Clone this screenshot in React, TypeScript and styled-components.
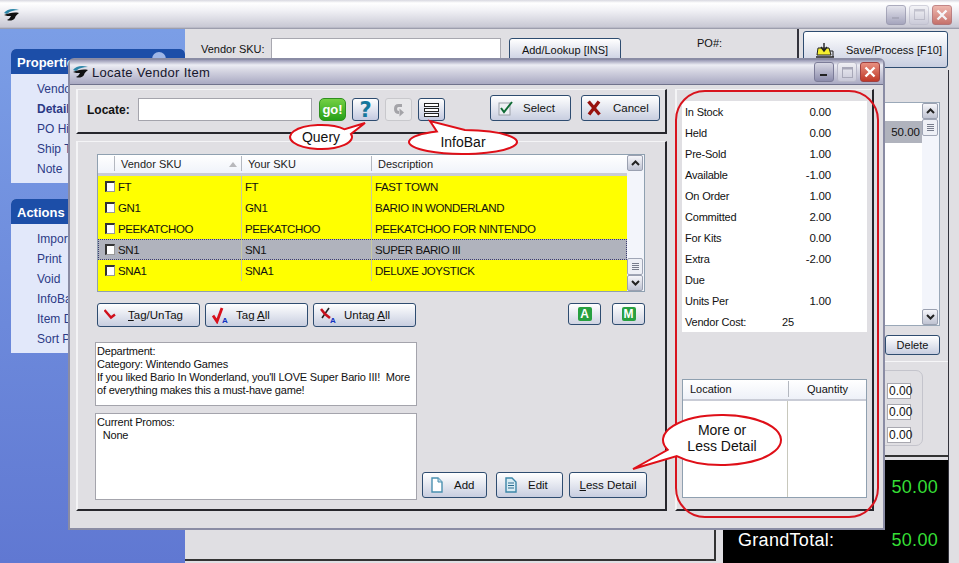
import React from "react";
import styled, { createGlobalStyle } from "styled-components";

const GlobalStyle = createGlobalStyle`
  html, body {
    margin: 0;
    padding: 0;
    background: #e0dfe3;
  }
  * {
    box-sizing: border-box;
  }
`;

const Page = styled.div`
  position: relative;
  width: 959px;
  height: 563px;
  overflow: hidden;
  background: #e0dfe3;
  font-family: "Liberation Sans", Arial, sans-serif;
  font-size: 11px;
  color: #111;
  display: flex;
  flex-direction: column;
`;

const MainTitle = styled.div`
  height: 29px;
  flex: none;
  display: flex;
  align-items: center;
  padding: 0 7px 0 3px;
  background: linear-gradient(#d8d8e0 0, #ffffff 3px, #f2f2f6 10px, #c8c8d4 27px, #8e90a0 29px);
`;

const Controls = styled.div`
  margin-left: auto;
  display: flex;
  gap: 3px;
`;

const WinBtn = styled.div<{ $kind: "min" | "max" | "close"; $faded?: boolean }>`
  width: 20px;
  height: 20px;
  border-radius: 3px;
  display: flex;
  align-items: center;
  justify-content: center;
  border: 1px solid ${(p) => (p.$kind === "close" ? "#a04040" : p.$kind === "min" ? "#7c7c98" : "#b8b8c8")};
  background: ${(p) =>
    p.$kind === "close"
      ? "linear-gradient(#e89080, #c03828)"
      : p.$kind === "min"
      ? "linear-gradient(#d8d8e4, #8c8cac)"
      : "linear-gradient(#f0f0f4, #c8c8d8)"};
  opacity: ${(p) => (p.$faded ? 0.62 : 1)};
`;

const Desktop = styled.div`
  flex: 1;
  display: flex;
  min-height: 0;
`;

const Sidebar = styled.aside`
  width: 185px;
  flex: none;
  padding: 20px 0 0 11px;
  background: linear-gradient(#7b9ee6, #6078d2);
  display: flex;
  flex-direction: column;
  gap: 16px;
`;

const TaskCard = styled.section`
  background: #e2e8fa;
  border-radius: 5px 5px 0 0;
`;

const TaskHead = styled.h3`
  position: relative;
  margin: 0;
  height: 25px;
  padding: 2px 0 0 6px;
  display: flex;
  align-items: center;
  font-size: 13px;
  font-weight: bold;
  color: #fff;
  background: #1c4ea8;
  border-radius: 5px 5px 0 0;
`;

const CollapseDot = styled.span`
  position: absolute;
  left: 141px;
  top: 3px;
  width: 14px;
  height: 14px;
  border-radius: 50%;
  background: #9fb6e6;
`;

const TaskList = styled.ul`
  margin: 0;
  padding: 5px 0 4px 26px;
  list-style: none;
`;

const TaskItem = styled.li<{ $bold?: boolean }>`
  height: 20px;
  line-height: 20px;
  font-size: 12px;
  color: #2c3a86;
  font-weight: ${(p) => (p.$bold ? "bold" : "normal")};
`;

const Workspace = styled.main`
  flex: 1;
  display: flex;
  flex-direction: column;
  min-width: 0;
`;

const TopRow = styled.div`
  height: 41px;
  flex: none;
  display: flex;
  align-items: flex-start;
  padding: 9px 10px 0 16px;
`;

const VendorLabel = styled.span`
  margin: 5px 8px 0 0;
  width: 62px;
  white-space: nowrap;
`;

const BackInput = styled.div`
  width: 230px;
  height: 24px;
  background: #fff;
  border: 1px solid #a8a8b0;
`;

const BackButton = styled.div`
  margin-left: 8px;
  width: 112px;
  height: 24px;
  display: flex;
  align-items: center;
  justify-content: center;
  border: 1px solid #2e4c70;
  border-radius: 3px;
  background: linear-gradient(#fff, #c8cee0);
`;

const PoLabel = styled.span`
  margin: -1px 0 0 76px;
`;

const SaveColumn = styled.div`
  margin-left: auto;
  padding-left: 4px;
  border-left: 2px solid #33333c;
  height: 70px;
  margin-top: -9px;
  width: 152px;
  flex: none;
`;

const SaveButton = styled.div`
  margin-top: 2px;
  height: 37px;
  width: 145px;
  display: flex;
  align-items: center;
  gap: 11px;
  padding-left: 11px;
  border: 1px solid #2e4c70;
  border-radius: 3px;
  background: linear-gradient(#fff, #c8cee0);
  white-space: nowrap;
  svg {
    flex: none;
  }
`;

const BackContent = styled.div`
  flex: 1;
  display: flex;
  min-height: 0;
`;

const BackLeft = styled.div`
  flex: 1;
  margin-bottom: 2px;
  border-right: 2px solid #333;
  border-bottom: 2px solid #333;
`;

const BackRight = styled.div`
  width: 226px;
  margin: 0 10px 0 7px;
  flex: none;
  display: flex;
  flex-direction: column;
  border-right: 1px solid #33333c;
`;

const BackTable = styled.div`
  margin-top: 32px;
  margin-right: 8px;
  height: 224px;
  flex: none;
  display: flex;
  background: #fff;
  border: 1px solid #9aa8b8;
`;

const BackTableBody = styled.div`
  flex: 1;
  padding-top: 18px;
`;

const BackRow = styled.div`
  height: 22px;
  line-height: 22px;
  text-align: right;
  padding-right: 2px;
  font-size: 11.5px;
  background: #b0b3bd;
`;

const DeleteRow = styled.div`
  display: flex;
  justify-content: flex-end;
  margin: 9px 8px 6px 0;
`;

const DeleteButton = styled.div`
  width: 55px;
  height: 20px;
  display: flex;
  align-items: center;
  justify-content: center;
  border: 1px solid #2e4c70;
  border-radius: 3px;
  background: linear-gradient(#fff, #c8cee0);
`;

const TotalsPanel = styled.div`
  height: 96px;
  flex: none;
  padding: 8px 0 0 100px;
  border-top: 1px solid #f6f6f8;
  border-bottom: 2px solid #333;
`;

const TotalsGroup = styled.div`
  width: 100px;
  height: 76px;
  padding: 12px 11px 0 0;
  display: flex;
  flex-direction: column;
  align-items: flex-end;
  border: 1px solid #c4c4cc;
  border-radius: 7px;
`;

const TotalBox = styled.div<{ $top: number }>`
  margin-top: ${(p) => p.$top}px;
  width: 24px;
  height: 16px;
  line-height: 15px;
  padding-left: 1px;
  font-size: 12px;
  background: #fff;
  border: 1px solid #a8a8b0;
`;

const BlackPanel = styled.div`
  margin-top: 3px;
  flex: 1;
  min-height: 0;
  background: #000;
  font-size: 18px;
  letter-spacing: 0.3px;
  color: #fff;
  display: flex;
  flex-direction: column;
  justify-content: flex-end;
  padding: 0 10px 12px 15px;
`;

const TotalLine = styled.div`
  display: flex;
  justify-content: space-between;
  height: 21px;
  & + & {
    margin-top: 32px;
  }
`;

const Green = styled.span`
  color: #35de35;
`;

/* modal */

const Modal = styled.div`
  position: absolute;
  left: 68px;
  top: 58px;
  width: 817px;
  height: 472px;
  background: #e0dfe3;
  border: 2px solid #8a8ca4;
  border-top-left-radius: 6px;
  border-top-right-radius: 6px;
  display: flex;
  flex-direction: column;
`;

const ModalTitle = styled.div`
  height: 24px;
  flex: none;
  display: flex;
  align-items: center;
  gap: 3px;
  padding: 0 3px 0 2px;
  font-size: 13px;
  letter-spacing: 0.3px;
  color: #16162c;
  text-shadow: 1px 1px 0 #c8c8d8;
  background: linear-gradient(#9898b4, #ecedf4 5px, #d8d8e4 10px, #a9a9c2 24px);
`;

const ModalBody = styled.div`
  flex: 1;
  display: flex;
  gap: 8px;
  padding: 4px 0 17px 6px;
  border-top: 1px solid #70728c;
  min-height: 0;
`;

const LeftColumn = styled.div`
  width: 591px;
  flex: none;
  display: flex;
  flex-direction: column;
  gap: 7px;
`;

const Panel = styled.div`
  border-style: solid;
  border-width: 1px 2px 2px 2px;
  border-color: #f4f4f6 #26262c #26262c #f4f4f6;
`;

const ToolbarPanel = styled(Panel)`
  height: 45px;
  flex: none;
  display: flex;
  align-items: flex-start;
  padding: 8px 0 0 9px;
`;

const LocateLabel = styled.label`
  font-size: 12px;
  font-weight: bold;
  margin: 5px 9px 0 0;
  width: 42px;
`;

const LocateInput = styled.div`
  width: 174px;
  height: 23px;
  background: #fff;
  border: 1px solid #a4a4ac;
`;

const SquareBtn = styled.div<{ $left: number }>`
  margin-left: ${(p) => p.$left}px;
  width: 27px;
  height: 23px;
  display: flex;
  align-items: center;
  justify-content: center;
  border: 1px solid #2e4c70;
  border-radius: 3px;
  background: linear-gradient(#fff, #c4cae0);
`;

const GoBtn = styled(SquareBtn)`
  border-color: #2f8f20;
  border-radius: 5px;
  background: linear-gradient(#74d044, #26a018);
  color: #fff;
  font-weight: bold;
  font-size: 13px;
`;

const HelpBtn = styled(SquareBtn)`
  color: #15789c;
  font-weight: bold;
  font-size: 21px;
  font-family: "DejaVu Sans", sans-serif;
`;

const DisabledBtn = styled(SquareBtn)`
  border-color: #c8c8cc;
  background: #e8e8ea;
`;

const ActionBtn = styled.div<{ $left: number; $width: number; $pad: number; $gap: number }>`
  margin: -3px 0 0 ${(p) => p.$left}px;
  width: ${(p) => p.$width}px;
  height: 26px;
  display: flex;
  align-items: center;
  gap: ${(p) => p.$gap}px;
  padding-left: ${(p) => p.$pad}px;
  font-size: 11.5px;
  border: 1px solid #2e4c70;
  border-radius: 3px;
  background: linear-gradient(#fff, #c8cee0);
`;

const ListPanel = styled(Panel)`
  flex: 1;
  padding: 12px 0 0 19px;
  display: flex;
  flex-direction: column;
  min-height: 0;
`;

const Table = styled.div`
  width: 548px;
  height: 138px;
  flex: none;
  display: flex;
  border: 1px solid #8fa0b0;
  background: #f3f5fb;
`;

const TableMain = styled.div`
  flex: 1;
  display: flex;
  flex-direction: column;
`;

const columns = "16px 127px 130px 1fr";

const TableHead = styled.div`
  height: 21px;
  flex: none;
  display: grid;
  grid-template-columns: ${columns};
  background: linear-gradient(#ffffff, #f0f3fa);
  border-bottom: 3px solid #c9ccd6;
`;

const HeadCell = styled.div`
  position: relative;
  display: flex;
  align-items: center;
  padding-left: 6px;
  border-left: 1px solid #b4b8c0;
  margin: 1px 0 2px;
  color: #222;
`;

const HeadBlank = styled.div``;

const SortMark = styled.span`
  position: absolute;
  right: 4px;
  top: 6px;
  width: 0;
  height: 0;
  border-left: 4px solid transparent;
  border-right: 4px solid transparent;
  border-bottom: 5px solid #b8b8bc;
`;

const TableRows = styled.div`
  flex: 1;
  background: #ffff00;
`;

const Row = styled.div<{ $selected?: boolean }>`
  height: 21px;
  display: grid;
  grid-template-columns: ${columns};
  align-items: stretch;
  background: ${(p) => (p.$selected ? "#b0b3bd" : "#ffff00")};
  outline: ${(p) => (p.$selected ? "1px dotted #3a3a70" : "none")};
  outline-offset: -1px;
`;

const CheckCell = styled.div`
  display: flex;
  align-items: center;
  padding-left: 7px;
`;

const Checkbox = styled.div`
  width: 10px;
  height: 11px;
  flex: none;
  background: #fff;
  border-top: 2px solid #333;
  border-left: 2px solid #333;
  border-right: 1px solid #999;
  border-bottom: 1px solid #999;
`;

const Cell = styled.div<{ $line?: boolean }>`
  display: flex;
  align-items: center;
  padding-left: ${(p) => (p.$line ? 3 : 4)}px;
  font-size: 11.5px;
  letter-spacing: -0.4px;
  white-space: nowrap;
  border-left: ${(p) => (p.$line ? "1px solid #c8c8a0" : "none")};
`;

const Scrollbar = styled.div`
  width: 17px;
  flex: none;
  display: flex;
  flex-direction: column;
  background: #f3f5fb;
`;

const ScrollArrow = styled.div`
  width: 16px;
  height: 16px;
  flex: none;
  display: flex;
  align-items: center;
  justify-content: center;
  background: linear-gradient(#f6f6fa, #bfc3d2);
  border: 1px solid #9aa0b0;
  border-radius: 2px;
`;

const ScrollThumb = styled.div`
  width: 16px;
  height: 17px;
  flex: none;
  display: flex;
  flex-direction: column;
  gap: 1px;
  align-items: center;
  justify-content: center;
  background: #eef0f6;
  border: 1px solid #a0a6b6;
  border-radius: 2px;
`;

const ThumbLine = styled.i`
  width: 7px;
  height: 1px;
  background: #777c8c;
`;

const Spring = styled.div`
  flex: 1;
`;

const TagRow = styled.div`
  margin-top: 11px;
  width: 548px;
  height: 24px;
  flex: none;
  display: flex;
  gap: 5px;
`;

const TagBtn = styled.div<{ $width: number }>`
  width: ${(p) => p.$width}px;
  display: flex;
  align-items: center;
  gap: 6px;
  padding-left: 6px;
  font-size: 11.5px;
  border: 1px solid #2e4c70;
  border-radius: 3px;
  background: linear-gradient(#fff, #c8cee0);
  white-space: nowrap;
  svg {
    flex: none;
  }
`;

const LetterBtn = styled.div<{ $left: number }>`
  margin-left: ${(p) => p.$left}px;
  width: 33px;
  height: 22px;
  display: flex;
  align-items: center;
  justify-content: center;
  border: 1px solid #2e4c70;
  border-radius: 3px;
  background: linear-gradient(#fff, #d0d4e2);
`;

const LetterChip = styled.span`
  width: 14px;
  height: 14px;
  display: flex;
  align-items: center;
  justify-content: center;
  border-radius: 2px;
  background: #28a040;
  color: #fff;
  font-weight: bold;
  font-size: 12px;
`;

const LowerArea = styled.div`
  margin: 15px 0 0 -2px;
  display: flex;
  align-items: flex-end;
`;

const NoteColumn = styled.div`
  width: 322px;
  flex: none;
  display: flex;
  flex-direction: column;
  gap: 7px;
`;

const NoteBox = styled.div<{ $height: number }>`
  height: ${(p) => p.$height}px;
  padding: 2px 1px;
  line-height: 13px;
  background: #fff;
  border: 1px solid #a4a4ac;
  letter-spacing: -0.2px;
  white-space: pre-wrap;
`;

const DetailButtons = styled.div`
  display: flex;
  margin: 0 0 2px 5px;
`;

const DetailBtn = styled.div<{ $width: number; $left: number; $center?: boolean }>`
  margin-left: ${(p) => p.$left}px;
  width: ${(p) => p.$width}px;
  height: 26px;
  display: flex;
  align-items: center;
  justify-content: ${(p) => (p.$center ? "center" : "flex-start")};
  gap: 10px;
  padding-left: ${(p) => (p.$center ? 0 : 7)}px;
  font-size: 11.5px;
  border: 1px solid #2e4c70;
  border-radius: 3px;
  background: linear-gradient(#fff, #c8cee0);
`;

const InfoPanel = styled(Panel)`
  width: 199px;
  flex: none;
  padding: 11px 0 0 5px;
  display: flex;
  flex-direction: column;
`;

const StatsBox = styled.div`
  width: 185px;
  height: 231px;
  flex: none;
  background: #fff;
  letter-spacing: -0.2px;
`;

const StatRow = styled.div`
  height: 21px;
  display: flex;
  align-items: center;
  padding-left: 3px;
`;

const StatLabel = styled.span`
  width: 102px;
`;

const StatValue = styled.span`
  width: 44px;
  text-align: right;
  font-size: 11.5px;
`;

const CostLabel = styled.span`
  width: 97px;
`;

const LocationGrid = styled.div`
  margin-top: 47px;
  width: 185px;
  height: 119px;
  flex: none;
  display: flex;
  flex-direction: column;
  background: #fff;
  border: 1px solid #8fa0b0;
`;

const locationColumns = "105px 1fr";

const LocationHead = styled.div`
  height: 21px;
  flex: none;
  display: grid;
  grid-template-columns: ${locationColumns};
  background: linear-gradient(#ffffff, #eef1f8);
  border-bottom: 2px solid #c9ccd6;
`;

const LocationTitle = styled.div<{ $line?: boolean }>`
  display: flex;
  align-items: center;
  justify-content: ${(p) => (p.$line ? "center" : "flex-start")};
  padding-left: ${(p) => (p.$line ? 0 : 7)}px;
  border-left: ${(p) => (p.$line ? "1px solid #b4b8c0" : "none")};
  margin: 1px 0 2px;
`;

const LocationBody = styled.div`
  flex: 1;
  display: grid;
  grid-template-columns: ${locationColumns};
`;

const LocationCol = styled.div`
  border-right: 1px solid #c8c8bc;
`;

/* annotations laid over the screenshot */

const RedFrame = styled.div`
  position: absolute;
  left: 675px;
  top: 90px;
  width: 204px;
  height: 428px;
  border: 2px solid #d8141e;
  border-radius: 30px;
  pointer-events: none;
`;

const Callout = styled.div<{ $x: number; $y: number; $w: number; $h: number }>`
  position: absolute;
  left: ${(p) => p.$x}px;
  top: ${(p) => p.$y}px;
  width: ${(p) => p.$w}px;
  height: ${(p) => p.$h}px;
`;

const CalloutText = styled.div<{ $left: number; $top: number; $width: number }>`
  position: absolute;
  left: ${(p) => p.$left}px;
  top: ${(p) => p.$top}px;
  width: ${(p) => p.$width}px;
  text-align: center;
  font-size: 14px;
  line-height: 16px;
  color: #111;
`;

const bubblePath = (
  cx: number,
  cy: number,
  rx: number,
  ry: number,
  start: number,
  end: number,
  tipX: number,
  tipY: number
) => {
  const px = (a: number) => cx + rx * Math.cos((a * Math.PI) / 180);
  const py = (a: number) => cy + ry * Math.sin((a * Math.PI) / 180);
  return `M${px(start)} ${py(start)} A${rx} ${ry} 0 1 1 ${px(end)} ${py(end)} L${tipX} ${tipY} Z`;
};

const Bubble = ({ x, y, w, h, d }: { x: number; y: number; w: number; h: number; d: string }) => (
  <svg width={w} height={h} viewBox={`${x} ${y} ${w} ${h}`} style={{ display: "block" }}>
    <path d={d} fill="#fff" stroke="#df0f18" strokeWidth="2" strokeLinejoin="miter" />
  </svg>
);

/* icons */

const Logo = () => (
  <svg width="17" height="14" viewBox="0 0 17 14">
    <path d="M1 5C4 1 10 0 16 2C11 2 7 3 4 6Z" fill="#2d86a8" />
    <path d="M1 7C6 5 11 4 16 5C14 7 12 8 12 10C10 13 6 13 4 12C6 11 7 10 8 8C6 8 3 8 1 7Z" fill="#111" />
  </svg>
);

const MinGlyph = ({ color }: { color: string }) => (
  <svg width="10" height="10" viewBox="0 0 10 10">
    <rect x="1" y="7" width="7" height="2" fill={color} />
  </svg>
);

const MaxGlyph = () => (
  <svg width="11" height="11" viewBox="0 0 11 11">
    <rect x="0.5" y="0.5" width="10" height="10" fill="none" stroke="#a8a8b8" />
    <rect x="0.5" y="0.5" width="10" height="2" fill="#a8a8b8" />
  </svg>
);

const CloseGlyph = () => (
  <svg width="12" height="12" viewBox="0 0 12 12">
    <path d="M1.5 1.5L10.5 10.5M10.5 1.5L1.5 10.5" stroke="#fff" strokeWidth="2.4" />
  </svg>
);

const SaveIcon = () => (
  <svg width="20" height="16" viewBox="0 0 20 16">
    <path d="M3 6H14L16 13H2Z" fill="#f4ee30" stroke="#222" />
    <path d="M1 15H19" stroke="#222" strokeWidth="1.5" />
    <path d="M15 9H18V15" fill="none" stroke="#222" />
    <path d="M9 1V8M6 5L9 9L12 5" fill="none" stroke="#222" strokeWidth="1.4" />
  </svg>
);

const CheckIcon = () => (
  <svg width="16" height="16" viewBox="0 0 16 16">
    <rect x="1" y="3" width="11" height="12" fill="#eef0f4" stroke="#9aa0a8" />
    <path d="M3 8L6 12L14 2" fill="none" stroke="#0f6b35" strokeWidth="2" />
  </svg>
);

const CrossIcon = () => (
  <svg width="14" height="16" viewBox="0 0 14 16">
    <path d="M1.5 1.5L12.5 14.5M12 1.5L2 14.5" stroke="#98120f" strokeWidth="3.4" />
  </svg>
);

const UndoIcon = () => (
  <svg width="12" height="14" viewBox="0 0 12 14">
    <path d="M9 2.5H5.5C3.5 2.5 2.5 4 2.5 6C2.5 8 3.5 9.5 6 9.5" fill="none" stroke="#a4a4a8" strokeWidth="3" />
    <path d="M6.5 5.5L11 9.5L6.5 13.5Z" fill="#a4a4a8" />
  </svg>
);

const BarsIcon = () => (
  <svg width="15" height="14" viewBox="0 0 15 14">
    <rect x="0.5" y="0.5" width="14" height="3" fill="#fff" stroke="#222" />
    <rect x="0.5" y="5.5" width="14" height="3" fill="#fff" stroke="#222" />
    <rect x="0.5" y="10.5" width="14" height="3" fill="#fff" stroke="#222" />
  </svg>
);

const ChevronIcon = ({ up }: { up?: boolean }) => (
  <svg width="9" height="6" viewBox="0 0 9 6">
    <path d={up ? "M1 5L4.5 1.5L8 5" : "M1 1L4.5 4.5L8 1"} fill="none" stroke="#222" strokeWidth="2" />
  </svg>
);

const TagIcon = () => (
  <svg width="18" height="16" viewBox="0 0 18 16">
    <path d="M0.5 3L7 10.5L11 7.5" fill="none" stroke="#d0101c" strokeWidth="2.4" />
  </svg>
);

const TagAllIcon = () => (
  <svg width="18" height="18" viewBox="0 0 18 18">
    <path d="M1 9.5L5 15.5L10 2" fill="none" stroke="#d8101c" strokeWidth="2.8" />
    <text x="10" y="17" fontSize="8" fontWeight="bold" fill="#1030c0" fontFamily="Liberation Sans">A</text>
  </svg>
);

const UntagAllIcon = () => (
  <svg width="18" height="18" viewBox="0 0 18 18">
    <path d="M9 2L2 12" fill="none" stroke="#222" strokeWidth="1.6" />
    <path d="M1 3L5 8L10 12" fill="none" stroke="#c8101c" strokeWidth="2.6" />
    <text x="10" y="17" fontSize="8" fontWeight="bold" fill="#1030c0" fontFamily="Liberation Sans">A</text>
  </svg>
);

const DocIcon = () => (
  <svg width="14" height="16" viewBox="0 0 14 16" style={{ flex: "none" }}>
    <path d="M2 1H8L12 5V15H2Z" fill="#fff" stroke="#4a90b0" strokeWidth="1.4" />
    <path d="M8 1V5H12" fill="#bcd8e6" stroke="#4a90b0" />
  </svg>
);

const EditDocIcon = () => (
  <svg width="14" height="16" viewBox="0 0 14 16" style={{ flex: "none" }}>
    <path d="M2 1H8L12 5V15H2Z" fill="#d8ecf4" stroke="#3c86a8" strokeWidth="1.4" />
    <path d="M4 6H10M4 8.5H10M4 11H10" stroke="#2c6c90" />
  </svg>
);

const rows = [
  { sku: "FT", yours: "FT", desc: "FAST TOWN" },
  { sku: "GN1", yours: "GN1", desc: "BARIO IN WONDERLAND" },
  { sku: "PEEKATCHOO", yours: "PEEKATCHOO", desc: "PEEKATCHOO FOR NINTENDO" },
  { sku: "SN1", yours: "SN1", desc: "SUPER BARIO III", selected: true },
  { sku: "SNA1", yours: "SNA1", desc: "DELUXE JOYSTICK" },
];

const stats = [
  ["In Stock", "0.00"],
  ["Held", "0.00"],
  ["Pre-Sold", "1.00"],
  ["Available", "-1.00"],
  ["On Order", "1.00"],
  ["Committed", "2.00"],
  ["For Kits", "0.00"],
  ["Extra", "-2.00"],
  ["Due", ""],
  ["Units Per", "1.00"],
];

const App: React.FC = () => {
  return (
    <Page>
      <GlobalStyle />
      <MainTitle>
        <Logo />
        <Controls>
          <WinBtn $kind="min" $faded><MinGlyph color="#8888a0" /></WinBtn>
          <WinBtn $kind="max" $faded><MaxGlyph /></WinBtn>
          <WinBtn $kind="close" $faded><CloseGlyph /></WinBtn>
        </Controls>
      </MainTitle>

      <Desktop>
        <Sidebar>
          <TaskCard>
            <TaskHead>Properties<CollapseDot /></TaskHead>
            <TaskList>
              <TaskItem>Vendor</TaskItem>
              <TaskItem $bold>Details</TaskItem>
              <TaskItem>PO History</TaskItem>
              <TaskItem>Ship To</TaskItem>
              <TaskItem>Note</TaskItem>
            </TaskList>
          </TaskCard>
          <TaskCard>
            <TaskHead>Actions</TaskHead>
            <TaskList>
              <TaskItem>Import</TaskItem>
              <TaskItem>Print</TaskItem>
              <TaskItem>Void</TaskItem>
              <TaskItem>InfoBar</TaskItem>
              <TaskItem>Item Detail</TaskItem>
              <TaskItem>Sort PO</TaskItem>
            </TaskList>
          </TaskCard>
        </Sidebar>

        <Workspace>
          <TopRow>
            <VendorLabel>Vendor SKU:</VendorLabel>
            <BackInput />
            <BackButton>Add/Lookup [INS]</BackButton>
            <PoLabel>PO#:</PoLabel>
            <SaveColumn>
              <SaveButton>
                <SaveIcon />
                Save/Process [F10]
              </SaveButton>
            </SaveColumn>
          </TopRow>
          <BackContent>
            <BackLeft />
            <BackRight>
              <BackTable>
                <BackTableBody>
                  <BackRow>50.00</BackRow>
                </BackTableBody>
                <Scrollbar>
                  <ScrollArrow><ChevronIcon up /></ScrollArrow>
                  <ScrollThumb><ThumbLine /><ThumbLine /><ThumbLine /><ThumbLine /></ScrollThumb>
                  <Spring />
                  <ScrollArrow><ChevronIcon /></ScrollArrow>
                </Scrollbar>
              </BackTable>
              <DeleteRow>
                <DeleteButton>Delete</DeleteButton>
              </DeleteRow>
              <TotalsPanel>
                <TotalsGroup>
                  <TotalBox $top={0}>0.00</TotalBox>
                  <TotalBox $top={5}>0.00</TotalBox>
                  <TotalBox $top={7}>0.00</TotalBox>
                </TotalsGroup>
              </TotalsPanel>
              <BlackPanel>
                <TotalLine>
                  <span />
                  <Green>50.00</Green>
                </TotalLine>
                <TotalLine>
                  <span>GrandTotal:</span>
                  <Green>50.00</Green>
                </TotalLine>
              </BlackPanel>
            </BackRight>
          </BackContent>
        </Workspace>
      </Desktop>

      <Modal>
        <ModalTitle>
          <Logo />
          Locate Vendor Item
          <Controls>
            <WinBtn $kind="min"><MinGlyph color="#222" /></WinBtn>
            <WinBtn $kind="max"><MaxGlyph /></WinBtn>
            <WinBtn $kind="close"><CloseGlyph /></WinBtn>
          </Controls>
        </ModalTitle>
        <ModalBody>
          <LeftColumn>
            <ToolbarPanel>
              <LocateLabel>Locate:</LocateLabel>
              <LocateInput />
              <GoBtn $left={7}>go!</GoBtn>
              <HelpBtn $left={6}>?</HelpBtn>
              <DisabledBtn $left={6}><UndoIcon /></DisabledBtn>
              <SquareBtn $left={6}><BarsIcon /></SquareBtn>
              <ActionBtn $left={45} $width={81} $pad={7} $gap={9}><CheckIcon />Select</ActionBtn>
              <ActionBtn $left={10} $width={79} $pad={5} $gap={12}><CrossIcon />Cancel</ActionBtn>
            </ToolbarPanel>

            <ListPanel>
              <Table>
                <TableMain>
                  <TableHead>
                    <HeadBlank />
                    <HeadCell>Vendor SKU<SortMark /></HeadCell>
                    <HeadCell>Your SKU</HeadCell>
                    <HeadCell>Description</HeadCell>
                  </TableHead>
                  <TableRows>
                    {rows.map((row) => (
                      <Row key={row.sku} $selected={row.selected}>
                        <CheckCell><Checkbox /></CheckCell>
                        <Cell>{row.sku}</Cell>
                        <Cell $line>{row.yours}</Cell>
                        <Cell $line>{row.desc}</Cell>
                      </Row>
                    ))}
                  </TableRows>
                </TableMain>
                <Scrollbar>
                  <ScrollArrow><ChevronIcon up /></ScrollArrow>
                  <Spring />
                  <ScrollThumb><ThumbLine /><ThumbLine /><ThumbLine /><ThumbLine /></ScrollThumb>
                  <ScrollArrow><ChevronIcon /></ScrollArrow>
                </Scrollbar>
              </Table>

              <TagRow>
                <TagBtn $width={103}><TagIcon /><span><u>T</u>ag/UnTag</span></TagBtn>
                <TagBtn $width={103}><TagAllIcon /><span>Tag <u>A</u>ll</span></TagBtn>
                <TagBtn $width={103}><UntagAllIcon /><span>Untag <u>A</u>ll</span></TagBtn>
                <LetterBtn $left={147}><LetterChip>A</LetterChip></LetterBtn>
                <LetterBtn $left={6}><LetterChip>M</LetterChip></LetterBtn>
              </TagRow>

              <LowerArea>
                <NoteColumn>
                  <NoteBox $height={64}>
                    {"Department:\nCategory: Wintendo Games\nIf you liked Bario In Wonderland, you'll LOVE Super Bario III!  More of everything makes this a must-have game!"}
                  </NoteBox>
                  <NoteBox $height={87}>{"Current Promos:\n  None"}</NoteBox>
                </NoteColumn>
                <DetailButtons>
                  <DetailBtn $left={0} $width={65}><DocIcon />Add</DetailBtn>
                  <DetailBtn $left={9} $width={67}><EditDocIcon />Edit</DetailBtn>
                  <DetailBtn $left={6} $width={78} $center><span><u>L</u>ess Detail</span></DetailBtn>
                </DetailButtons>
              </LowerArea>
            </ListPanel>
          </LeftColumn>

          <InfoPanel>
            <StatsBox>
              {stats.map(([label, value]) => (
                <StatRow key={label}>
                  <StatLabel>{label}</StatLabel>
                  <StatValue>{value}</StatValue>
                </StatRow>
              ))}
              <StatRow>
                <CostLabel>Vendor Cost:</CostLabel>
                <span>25</span>
              </StatRow>
            </StatsBox>
            <LocationGrid>
              <LocationHead>
                <LocationTitle>Location</LocationTitle>
                <LocationTitle $line>Quantity</LocationTitle>
              </LocationHead>
              <LocationBody>
                <LocationCol />
              </LocationBody>
            </LocationGrid>
          </InfoPanel>
        </ModalBody>
      </Modal>

      <RedFrame />

      <Callout $x={285} $y={118} $w={85} $h={36}>
        <Bubble x={285} y={118} w={85} h={36} d={bubblePath(321, 137, 31, 12, -15, -40, 365, 123)} />
        <CalloutText $left={6} $top={11} $width={60}>Query</CalloutText>
      </Callout>
      <Callout $x={405} $y={116} $w={118} $h={44}>
        <Bubble x={405} y={116} w={118} h={44} d={bubblePath(463, 142, 54, 12, -88, -119, 430, 121)} />
        <CalloutText $left={8} $top={18} $width={100}>InfoBar</CalloutText>
      </Callout>
      <Callout $x={628} $y={410} $w={158} $h={62}>
        <Bubble x={628} y={410} w={158} h={62} d={bubblePath(722, 440, 59, 25, 157, 140, 633, 469)} />
        <CalloutText $left={44} $top={12} $width={100}>More or<br />Less Detail</CalloutText>
      </Callout>
    </Page>
  );
};

export default App;
